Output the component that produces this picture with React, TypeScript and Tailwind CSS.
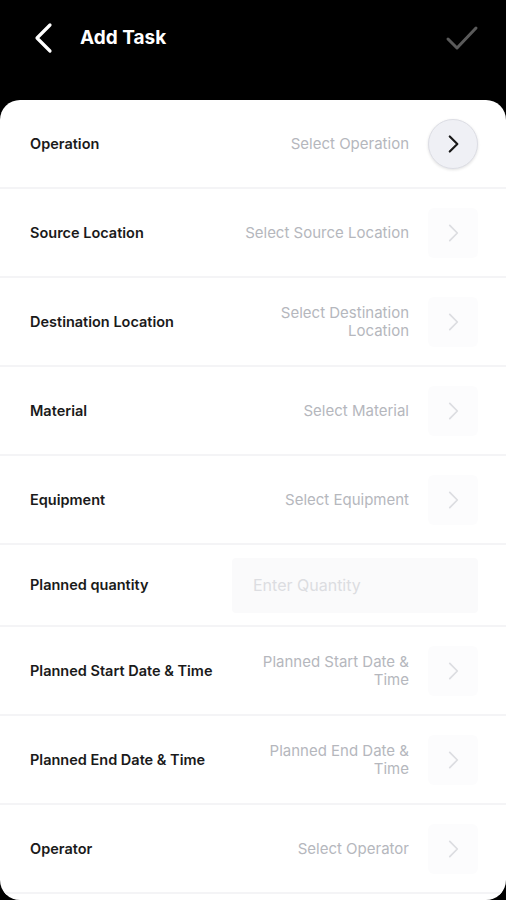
import React from "react";

interface Field {
  label: string;
  placeholder: string;
  kind?: "select" | "input";
  active?: boolean;
}

const fields: Field[] = [
  { label: "Operation", placeholder: "Select Operation", active: true },
  { label: "Source Location", placeholder: "Select Source Location" },
  { label: "Destination Location", placeholder: "Select Destination Location" },
  { label: "Material", placeholder: "Select Material" },
  { label: "Equipment", placeholder: "Select Equipment" },
  { label: "Planned quantity", placeholder: "Enter Quantity", kind: "input" },
  { label: "Planned Start Date & Time", placeholder: "Planned Start Date & Time" },
  { label: "Planned End Date & Time", placeholder: "Planned End Date & Time" },
  { label: "Operator", placeholder: "Select Operator" },
];

const Chevron = ({ color, width }: { color: string; width: number }) => (
  <svg width={26} height={26} viewBox="0 0 24 24" fill="none">
    <path d="M9 5l7 7-7 7" stroke={color} strokeWidth={width} strokeLinecap="round" strokeLinejoin="round" />
  </svg>
);

const App: React.FC = () => {
  return (
    <div className="w-[506px] h-[900px] bg-black overflow-hidden font-['Inter','Noto_Sans',sans-serif]">
      {/* header */}
      <div className="h-[100px] flex items-start justify-between px-[30px] pt-[22px]">
        <div className="flex items-center gap-[26px]">
          <svg width="24" height="32" viewBox="0 0 24 32" fill="none">
            <path d="M20 3L7 16l13 13" stroke="#fff" strokeWidth="3.2" strokeLinecap="round" strokeLinejoin="round" />
          </svg>
          <h1 className="text-white text-[19px] font-bold">Add Task</h1>
        </div>
        <svg width="34" height="30" viewBox="0 0 34 30" fill="none" className="mt-[1px] -mr-[3px]">
          <path d="M3 16l9 9L31 5" stroke="#5a5a5a" strokeWidth="3" strokeLinecap="round" strokeLinejoin="round" />
        </svg>
      </div>

      {/* form card */}
      <div className="h-[800px] bg-white rounded-[20px] overflow-hidden">
        {fields.map((f) => (
          <div
            key={f.label}
            className={`flex items-center justify-between pl-[30px] pr-[28px] border-b-2 border-[#f4f4f6] ${
              f.kind === "input" ? "h-[82px]" : "h-[89px]"
            }`}
          >
            <span className="text-[14.5px] font-semibold text-[#1a1a1a]">{f.label}</span>
            {f.kind === "input" ? (
              <div className="w-[246px] h-[55px] bg-[#fafafb] rounded-[4px] flex items-center px-[21px]">
                <span className="text-[16px] text-[#dcdde1]">{f.placeholder}</span>
              </div>
            ) : (
              <div className="flex items-center gap-[19px]">
                <span className="w-[166px] text-right text-[15px] leading-[18px] text-[#b5b7bd]">
                  {f.placeholder}
                </span>
                {f.active ? (
                  <div className="w-[50px] h-[50px] rounded-full bg-[#eff0f5] border border-[#dcdde4] shadow-[0_1px_3px_rgba(0,0,0,0.12)] flex items-center justify-center">
                    <Chevron color="#1a1a1a" width={2} />
                  </div>
                ) : (
                  <div className="w-[50px] h-[50px] rounded-[6px] bg-[#fcfcfd] flex items-center justify-center">
                    <Chevron color="#dcdde1" width={1.6} />
                  </div>
                )}
              </div>
            )}
          </div>
        ))}
      </div>
    </div>
  );
};

export default App;
